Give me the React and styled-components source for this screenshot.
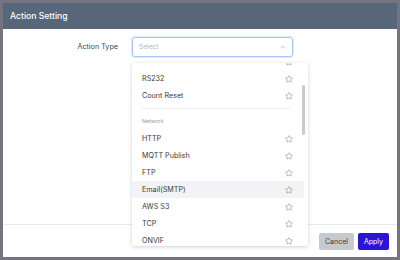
import React from 'react';
import styled, { createGlobalStyle } from 'styled-components';
import { Star, ChevronUp } from 'lucide-react';

const Global = createGlobalStyle`
  html, body { margin: 0; padding: 0; }
  body {
    width: 400px;
    height: 260px;
    background: #75737f;
    font-family: Inter, "Noto Sans", sans-serif;
    overflow: hidden;
  }
`;

const items = [
  { label: '' },
  { label: 'RS232' },
  { label: 'Count Reset' },
  { header: 'Network' },
  { label: 'HTTP' },
  { label: 'MQTT Publish' },
  { label: 'FTP' },
  { label: 'Email(SMTP)', active: true },
  { label: 'AWS S3' },
  { label: 'TCP' },
  { label: 'ONVIF' },
];

export default function App() {
  return (
    <>
      <Global />
      <Modal>
        <Header>Action Setting</Header>
        <Body>
          <Field>
            <Label>Action Type</Label>
            <SelectWrap>
              <Select>
                <Placeholder>Select</Placeholder>
                <ChevronUp size={8} strokeWidth={1.6} color="#9a9a9a" />
              </Select>
              <Dropdown>
                <List>
                  {items.map((it, i) =>
                    it.header ? (
                      <Group key={i}>
                        <Divider />
                        <GroupTitle>{it.header}</GroupTitle>
                      </Group>
                    ) : (
                      <Item key={i} $active={it.active}>
                        <span>{it.label}</span>
                        <Star size={8} strokeWidth={1.4} color="#6f6f6f" />
                      </Item>
                    )
                  )}
                </List>
                <Thumb />
              </Dropdown>
            </SelectWrap>
          </Field>
        </Body>
        <Footer>
          <Button>Cancel</Button>
          <Button $primary>Apply</Button>
        </Footer>
      </Modal>
    </>
  );
}

const Modal = styled.div`
  margin: 3px;
  width: 394px;
  height: 254px;
  background: #fff;
  display: flex;
  flex-direction: column;
`;

const Header = styled.div`
  height: 26px;
  background: #586679;
  color: #fff;
  font-size: 8.6px;
  font-weight: 500;
  display: flex;
  align-items: center;
  padding-left: 7px;
  flex-shrink: 0;
`;

const Body = styled.div`
  flex: 1;
  padding-top: 8px;
`;

const Field = styled.div`
  display: flex;
  align-items: flex-start;
`;

const Label = styled.div`
  width: 115px;
  text-align: right;
  font-size: 7.2px;
  color: #444;
  line-height: 20px;
  padding-right: 14px;
`;

const SelectWrap = styled.div`
  position: relative;
  width: 161px;
`;

const Select = styled.div`
  height: 18px;
  border: 1px solid #a9c7f6;
  border-radius: 3px;
  box-shadow: 0 0 0 1px #dde9fc;
  display: flex;
  align-items: center;
  justify-content: space-between;
  padding: 0 5px 0 6px;
`;

const Placeholder = styled.span`
  font-size: 6.6px;
  color: #b4b4b4;
`;

const Dropdown = styled.div`
  position: absolute;
  top: 26px;
  left: 0;
  width: 176px;
  height: 183px;
  background: #fff;
  border-radius: 2px;
  box-shadow: 0 1px 4px rgba(0, 0, 0, 0.18);
  overflow: hidden;
  z-index: 5;
`;

const List = styled.div`
  margin-top: -10px;
`;

const Item = styled.div`
  height: 17px;
  display: flex;
  align-items: center;
  justify-content: space-between;
  padding: 0 11px 0 10px;
  font-size: 7.2px;
  color: #3a3a3a;
  background: ${p => (p.$active ? '#f2f3f5' : 'transparent')};
  margin-right: 4px;
`;

const Group = styled.div`
  padding: 4px 10px 0;
`;

const Divider = styled.div`
  height: 1px;
  background: #eeeeee;
  margin-right: 8px;
`;

const GroupTitle = styled.div`
  height: 17px;
  line-height: 17px;
  font-size: 5.4px;
  color: #9a9a9a;
  margin-top: 4px;
`;

const Thumb = styled.div`
  position: absolute;
  right: 3px;
  top: 22px;
  width: 3px;
  height: 50px;
  border-radius: 2px;
  background: #c9c9c9;
`;

const Footer = styled.div`
  height: 32px;
  border-top: 1px solid #e9e9e9;
  display: flex;
  align-items: center;
  justify-content: flex-end;
  gap: 4px;
  padding-right: 8px;
  flex-shrink: 0;
`;

const Button = styled.button`
  height: 17px;
  padding: 0 6px;
  border: none;
  border-radius: 2px;
  font-family: Inter, sans-serif;
  font-size: 7px;
  background: ${p => (p.$primary ? '#2a15d6' : '#c6c9ce')};
  color: ${p => (p.$primary ? '#fff' : '#3c3c3c')};
`;
